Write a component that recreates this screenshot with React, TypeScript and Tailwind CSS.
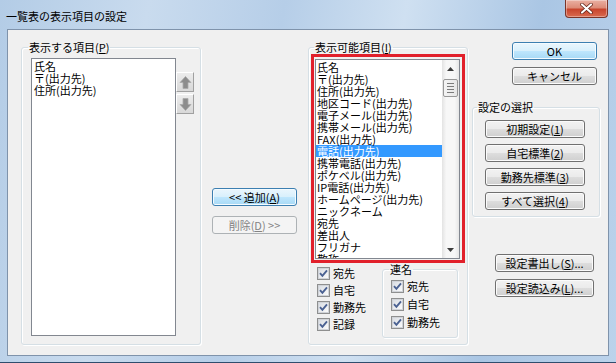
import React from 'react';

const U = ({ children }: { children: React.ReactNode }) => (
  <span className="underline underline-offset-[1px]">{children}</span>
);

const btnBase =
  'flex items-center justify-center h-[18px] rounded-[3px] border text-[11px] leading-none whitespace-nowrap';
const btnNormal =
  btnBase +
  ' border-[#707070] text-black bg-[linear-gradient(#f2f2f2_0%,#ebebeb_48%,#dddddd_52%,#cfcfcf_100%)] shadow-[inset_0_0_0_1px_#fbfbfb]';
const btnBlue =
  btnBase +
  ' border-[#3c7fb1] text-black bg-[linear-gradient(#eaf6fd_0%,#d9f0fc_48%,#bee6fd_52%,#a7d9f5_100%)] shadow-[inset_0_0_0_1px_#f4fbff]';
const btnDisabled = btnBase + ' border-[#adb2b5] text-[#838383] bg-[#f4f4f4]';

const group = 'border border-[#d5dfe5] rounded-[3px] shadow-[inset_1px_1px_0_#fff,1px_1px_0_#fff] flex-none';

const available = [
  '氏名',
  '〒(出力先)',
  '住所(出力先)',
  '地区コード(出力先)',
  '電子メール(出力先)',
  '携帯メール(出力先)',
  'FAX(出力先)',
  '電話(出力先)',
  '携帯電話(出力先)',
  'ポケベル(出力先)',
  'IP電話(出力先)',
  'ホームページ(出力先)',
  'ニックネーム',
  '宛先',
  '差出人',
  'フリガナ',
  '敬称',
];

function Check({ label }: { label: string }) {
  return (
    <div className="flex items-center h-[13px]">
      <span className="w-[13px] h-[13px] flex-none border border-[#8e8f8f] bg-[#f4f4f4] flex items-center justify-center">
        <span className="w-[11px] h-[11px] border border-[#d0d3d8] bg-[linear-gradient(135deg,#d9dde3,#fbfbfb)] flex items-center justify-center">
          <svg width="9" height="9" viewBox="0 0 9 9">
            <path d="M1 4.2 L3.4 6.8 L8 1.4" fill="none" stroke="#4a6192" strokeWidth="1.9" />
          </svg>
        </span>
      </span>
      <span className="ml-[3px] leading-[13px]">{label}</span>
    </div>
  );
}

function MoveBtn({ up }: { up?: boolean }) {
  return (
    <div className="w-[18px] h-[20px] flex items-center justify-center border border-t-white border-l-white border-b-[#a0a0a0] border-r-[#a0a0a0] bg-[linear-gradient(#ececec,#d8d8d8)]">
      <svg width="13" height="13" viewBox="0 0 13 13">
        <g transform={up ? undefined : 'rotate(180 6.5 6.5)'}>
          <path d="M6.5 0.5 L12 6.5 L9 6.5 L9 12.5 L4 12.5 L4 6.5 L1 6.5 Z" fill="#8c8c8c" stroke="#a9a9a9" strokeWidth="0.8" />
        </g>
      </svg>
    </div>
  );
}

function Tri({ up }: { up?: boolean }) {
  return (
    <svg width="7" height="4" viewBox="0 0 7 4">
      <path d={up ? 'M3.5 0 L7 4 L0 4 Z' : 'M0 0 L7 0 L3.5 4 Z'} fill="#3c3c3c" />
    </svg>
  );
}

export default function App() {
  return (
    <div className="w-[616px] h-[363px] flex flex-col overflow-hidden border-b border-[#2f4d6d] font-['Noto_Sans_CJK_JP','Liberation_Sans',sans-serif] text-[11px] text-black bg-[linear-gradient(100deg,#b3cce6_0%,#c9dbee_22%,#b6cee8_42%,#cfe0f1_60%,#aac6e4_80%,#bcd3eb_100%)]">
      {/* title bar */}
      <div className="h-[29px] flex-none flex items-start justify-between">
        <div className="pl-[6px] pt-[10px] leading-[12px]">一覧表の表示項目の設定</div>
        <div className="mr-[8px] w-[43px] h-[18px] rounded-b-[4px] border border-t-0 border-[#7a3428] bg-[linear-gradient(#eab0a2_0%,#dd8c78_45%,#c8452d_55%,#d96b50_100%)] shadow-[inset_0_0_0_1px_rgba(255,255,255,0.35)] flex items-center justify-center">
          <svg width="13" height="11" viewBox="0 0 13 11">
            <path d="M2 1.5 L11 9.5 M11 1.5 L2 9.5" stroke="#5a1d12" strokeWidth="3.6" strokeLinecap="round" />
            <path d="M2 1.5 L11 9.5 M11 1.5 L2 9.5" stroke="#ffffff" strokeWidth="2.2" strokeLinecap="round" />
          </svg>
        </div>
      </div>

      {/* client */}
      <div className="ml-[7px] w-[602px] h-[327px] flex-none border border-[#7f93ab] bg-[#f0f0f0] flex items-start pl-[13px] pt-[11px]">
        {/* 表示する項目 */}
        <fieldset className={group + ' w-[180px] h-[304px]'}>
          <legend className="ml-[6px] px-[1px] leading-[12px]">
            表示する項目(<U>P</U>)
          </legend>
          <div className="flex items-start ml-[9px] mt-[5px]">
            <div className="w-[145px] h-[278px] border border-[#828790] bg-white pl-[2px] pt-[1px] leading-[12px]">
              <div>氏名</div>
              <div>〒(出力先)</div>
              <div>住所(出力先)</div>
            </div>
            <div className="flex flex-col gap-[2px] mt-[14px]">
              <MoveBtn up />
              <MoveBtn />
            </div>
          </div>
        </fieldset>

        {/* add / remove */}
        <div className="ml-[11px] w-[85px] mt-[147px] flex-none flex flex-col gap-[10px]">
          <div className={btnBlue}>
            {'<< 追加('}
            <U>A</U>)
          </div>
          <div className={btnDisabled}>
            削除(<U>D</U>
            {') >>'}
          </div>
        </div>

        {/* 表示可能項目 */}
        <fieldset className={group + ' ml-[11px] w-[160px] h-[304px]'}>
          <legend className="ml-[5px] px-[1px] leading-[12px]">
            表示可能項目(<U>I</U>)
          </legend>
          <div className="ml-[2px] mt-[1px] w-[154px] h-[209px] border-[3px] border-[#e1202b] pl-[1px] pt-[2px]">
            <div className="w-[145px] h-[200px] border border-[#828790] bg-white flex">
              <div className="flex-1 overflow-hidden pt-[1px] leading-[12px] whitespace-nowrap">
                {available.map((t, i) => (
                  <div key={t} className={i === 7 ? 'bg-[#3399ff] text-white pl-[1px]' : 'pl-[1px]'}>
                    {t}
                  </div>
                ))}
              </div>
              <div className="w-[17px] flex-none flex flex-col items-center bg-[linear-gradient(90deg,#e3e3e3,#f7f7f7_25%,#f7f7f7_75%,#e6e6e6)]">
                <div className="h-[17px] flex items-center justify-center">
                  <Tri up />
                </div>
                <div className="mt-[2px] w-[15px] h-[18px] rounded-[2px] border border-[#979797] bg-[linear-gradient(90deg,#f4f4f4,#e6e6e6)] flex flex-col items-center justify-center gap-[2px]">
                  <span className="w-[7px] h-[1px] bg-[#7a7a7a]" />
                  <span className="w-[7px] h-[1px] bg-[#7a7a7a]" />
                  <span className="w-[7px] h-[1px] bg-[#7a7a7a]" />
                  <span className="w-[7px] h-[1px] bg-[#7a7a7a]" />
                </div>
                <div className="flex-1" />
                <div className="h-[17px] flex items-center justify-center">
                  <Tri />
                </div>
              </div>
            </div>
          </div>
          <div className="flex items-start ml-[8px]">
            <div className="w-[65px] mt-[4px] flex flex-col gap-[4px]">
              <Check label="宛先" />
              <Check label="自宅" />
              <Check label="勤務先" />
              <Check label="記録" />
            </div>
            <fieldset className={group + ' w-[76px] h-[75px]'}>
              <legend className="ml-[6px] px-[1px] leading-[12px]">連名</legend>
              <div className="pl-[8px] mt-[5px] flex flex-col gap-[5px]">
                <Check label="宛先" />
                <Check label="自宅" />
                <Check label="勤務先" />
              </div>
            </fieldset>
          </div>
        </fieldset>

        {/* right column */}
        <div className="ml-[4px] w-[128px] flex-none flex flex-col">
          <div className={btnBlue + ' ml-[40px] mt-[1px] w-[85px]'}>OK</div>
          <div className={btnNormal + ' ml-[40px] mt-[7px] w-[85px]'}>キャンセル</div>
          <fieldset className={group + ' mt-[16px] w-[128px] h-[116px]'}>
            <legend className="ml-[4px] px-[1px] leading-[12px]">設定の選択</legend>
            <div className="ml-[12px] mt-[7px] w-[100px] flex flex-col gap-[6px]">
              <div className={btnNormal}>
                初期設定(<U>1</U>)
              </div>
              <div className={btnNormal}>
                自宅標準(<U>2</U>)
              </div>
              <div className={btnNormal}>
                勤務先標準(<U>3</U>)
              </div>
              <div className={btnNormal}>
                すべて選択(<U>4</U>)
              </div>
            </div>
          </fieldset>
          <div className={btnNormal + ' ml-[23px] mt-[37px] w-[99px]'}>
            設定書出し(<U>S</U>)...
          </div>
          <div className={btnNormal + ' ml-[23px] mt-[7px] w-[99px]'}>
            設定読込み(<U>L</U>)...
          </div>
        </div>
      </div>
    </div>
  );
}
